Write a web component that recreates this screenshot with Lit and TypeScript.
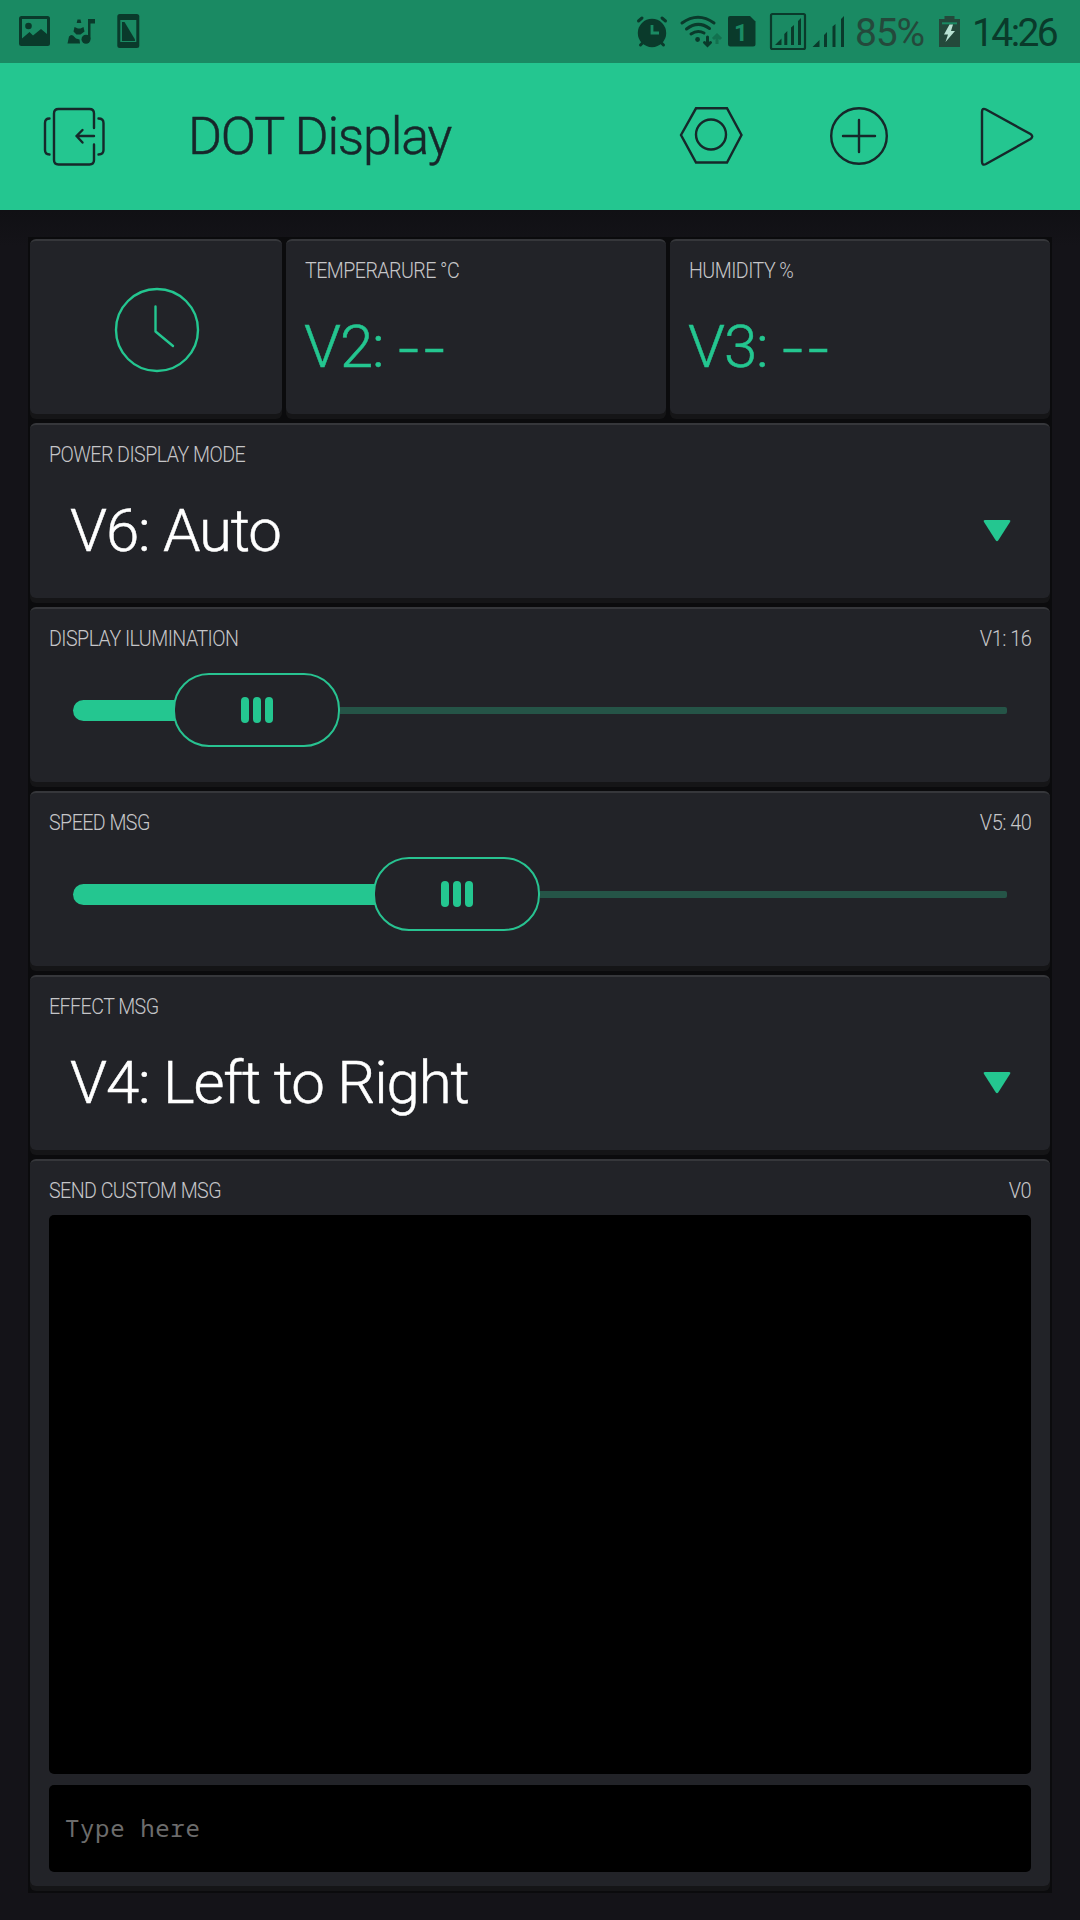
import { LitElement, html, svg, css, nothing } from "lit";
import type { SVGTemplateResult, TemplateResult } from "lit";
import { customElement, property } from "lit/decorators.js";
import { styleMap } from "lit/directives/style-map.js";

/** Status bar glyph: a full-height slice of the bar starting at `x`. */
const glyph = (x: number, w: number, body: SVGTemplateResult) =>
  html`<svg width=${w} height="63" viewBox="${x} 0 ${w} 63">${body}</svg>`;

/** App bar glyph: a full-height slice of the bar starting at `x`. */
const tool = (x: number, w: number, body: SVGTemplateResult) =>
  html`<svg class="tool" width=${w} height="147" viewBox="${x} 63 ${w} 147">${body}</svg>`;

@customElement("status-bar")
class StatusBar extends LitElement {
  static styles = css`
    :host {
      display: flex;
      height: 63px;
      padding-left: 15px;
      box-sizing: border-box;
      background: #1a8a63;
      color: #0a3a2b;
      font-family: Roboto, "Liberation Sans", sans-serif;
      font-size: 39px;
      line-height: 67px;
    }
    svg { display: block; flex: none; fill: #0a3a2b; }
    .spacer { flex: 1; }
    .line { fill: none; stroke: #0a3a2b; stroke-width: 3; stroke-linecap: round; }
    .frame { fill: none; stroke: #0a3a2b; stroke-width: 2.2; }
    .up { fill: none; stroke: #12714f; stroke-width: 3; }
    .cut { fill: #1a8a63; }
    .cut-line { fill: none; stroke: #1a8a63; stroke-width: 2.8; }
    .sim { font: 700 24px Roboto, sans-serif; fill: #1a8a63; }
    .cell { fill: #24493b; }
    .bolt { fill: #b9e2d3; }
    .percent { width: 80px; padding-left: 5px; letter-spacing: -1.2px; color: #24493b; white-space: nowrap; }
    .clock { width: 108px; padding-left: 7px; letter-spacing: -2.6px; white-space: nowrap; }
  `;
  render() {
    return html`
      ${glyph(15, 45, svg`
        <rect x="19" y="16" width="31" height="30" rx="2.5"/>
        <path class="cut" d="M22 19H47V34L41 29L33 35.5L29.5 32L22 38.5Z"/>
        <circle cx="28.5" cy="26" r="3.3"/>`)}
      ${glyph(60, 50, svg`
        <path d="M88 19H95V23.5H90.5V39H88Z"/>
        <circle cx="86" cy="39.3" r="4.5"/>
        <path d="M77.5 19.5h3l.8 3.5h-4.6zM74.5 27l3.500 1.500h2.500l3-1.500 1 4.500-4 3h-4l-3-3zM71 35l2 .5 3 3 3.500 1 .5 4H67.500L69 36.500z"/>`)}
      ${glyph(110, 40, svg`
        <rect x="117.300" y="14" width="22" height="34" rx="2.5"/>
        <rect class="cut" x="120.300" y="20" width="16" height="22"/>
        <path d="M122 22h2.500L135 39.500V41H122z"/>`)}
      <span class="spacer"></span>
      ${glyph(630, 45, svg`
        <circle cx="652" cy="33" r="14.2"/>
        <path class="line" d="M638.500 21l3.500-3M662 18l3.500 3M640.500 45l2.500-2.500M663.500 45l-2.500-2.500"/>
        <path class="cut-line" d="M652 25V33H659"/>`)}
      ${glyph(675, 50, svg`
        <path class="line" d="M682 23Q698 11.500 714 23M686.500 29Q698 20 709.500 28.500M691 34Q697.500 29.500 704 33"/>
        <circle cx="697.600" cy="39.500" r="2.400"/>
        <path class="line" d="M707.500 37V45M704.500 42.500L707.500 45.500L710.500 42.500"/>
        <path class="up" d="M717 44V35M713 39L717 35L721 39"/>`)}
      ${glyph(725, 40, svg`
        <path d="M730 16H750L755.500 21.500V44Q755.500 46.500 753 46.500H730.500Q728 46.500 728 44V18Q728 16 730 16Z"/>
        <text class="sim" x="734" y="41">1</text>`)}
      ${glyph(765, 45, svg`
        <rect class="frame" x="771" y="14" width="34" height="35" rx="1.5"/>
        <path d="M775 45L781.500 38.500V45ZM784.300 45V34L787.300 31V45ZM791 45V27.500L794 25V45ZM798 45V21L801 18V45Z"/>`)}
      ${glyph(810, 40, svg`
        <path d="M812.500 47L819.500 40V47ZM824 47V35L827 32V47ZM832.500 47V26.500L835.500 24V47ZM841 47V19L844 16V47Z"/>`)}
      <span class="percent">85%</span>
      ${glyph(935, 30, svg`
        <path class="cell" d="M944.500 16H954.500V19H960V47H939V19H944.500Z"/>
        <rect class="cut" x="942" y="22.300" width="15" height="2"/>
        <path class="bolt" d="M949.500 24.500H953L951 31H955L945.500 42L948 34.500H944Z"/>`)}
      <span class="clock">14:26</span>
    `;
  }
}

@customElement("app-bar")
class AppBar extends LitElement {
  static styles = css`
    :host {
      display: flex;
      height: 147px;
      background: #24c690;
      color: #17262a;
      font-family: Roboto, "Liberation Sans", sans-serif;
    }
    .tool {
      display: block;
      flex: none;
      fill: none;
      stroke: #16282a;
      stroke-width: 2.4;
      stroke-linecap: round;
      stroke-linejoin: round;
    }
    .title {
      flex: 1;
      padding-left: 30px;
      font-size: 52px;
      font-weight: 300;
      line-height: 147px;
      letter-spacing: -1.2px;
      -webkit-text-stroke: 0.5px #17262a;
    }
  `;
  render() {
    return html`
      ${tool(0, 158, svg`
        <path d="M94 128V113.500Q94 109 89.500 109H58.500Q54 109 54 113.500V160Q54 164.500 58.500 164.500H89.500Q94 164.500 94 160V144.500"/>
        <path d="M94 136H76.500M82.500 130L76.500 136L82.500 142.500"/>
        <path d="M49.500 118.500Q45 118.500 45 123V150Q45 154.500 49.500 154.500M98.500 118.500Q103.500 118.500 103.500 123V150Q103.500 154.500 98.500 154.500"/>`)}
      <span class="title">DOT Display</span>
      ${tool(660, 110, svg`
        <path d="M681 135L696 108.300H727L741.500 135L727 162.500H696Z" stroke-linejoin="miter"/>
        <circle cx="711" cy="134.500" r="15"/>`)}
      ${tool(770, 180, svg`
        <circle cx="859" cy="136" r="27.800"/>
        <path d="M859 120V152M843 136H875"/>`)}
      ${tool(950, 130, svg`
        <path d="M982 112Q982 107.500 986 109.500L1030.500 134Q1034 136.500 1030.500 139L986 164Q982 166 982 161.500Z"/>`)}
    `;
  }
}

@customElement("widget-card")
class WidgetCard extends LitElement {
  @property() label = "";
  @property() pin = "";
  static styles = css`
    :host {
      display: flex;
      flex-direction: column;
      box-sizing: border-box;
      min-width: 0;
      padding: 0 19px;
      border-radius: 6px;
      background: #222328;
      border-top: 2px solid #36373b;
      box-shadow: 0 5px 0 #151517;
      margin-bottom: 5px;
      font-family: Roboto, "Liberation Sans", sans-serif;
    }
    .head {
      display: flex;
      flex: none;
      justify-content: space-between;
      height: 54px;
      line-height: 60px;
      font-size: 21.5px;
      font-weight: 300;
      color: #c6c6c8;
      letter-spacing: -0.6px;
      white-space: nowrap;
    }
    .label { transform: scaleX(0.913); transform-origin: 0 0; }
    .pin { transform: scaleX(0.93); transform-origin: 100% 0; }
  `;
  render() {
    return html`
      ${this.label
        ? html`<div class="head"><span class="label">${this.label}</span><span class="pin">${this.pin || nothing}</span></div>`
        : nothing}
      <slot></slot>
    `;
  }
}

@customElement("pin-slider")
class PinSlider extends LitElement {
  /** Width in pixels of the filled part left of the thumb. */
  @property({ type: Number }) filled = 0;
  static styles = css`
    :host {
      display: flex;
      align-items: center;
      height: 74px;
      margin: 10px 24px 0;
    }
    .fill {
      flex: none;
      height: 21px;
      margin-right: -6px;
      padding-right: 6px;
      border-radius: 10.5px 0 0 10.5px;
      background: #24c690;
    }
    .thumb {
      flex: none;
      display: flex;
      align-items: center;
      justify-content: center;
      gap: 4px;
      box-sizing: border-box;
      width: 167px;
      height: 74px;
      border: 2px solid #28c391;
      border-radius: 36px;
      background: #222328;
      z-index: 1;
    }
    .grip { width: 8px; height: 26px; border-radius: 4px; background: #24c690; }
    .rest { flex: 1; height: 7px; border-radius: 0 2px 2px 0; background: #255447; }
  `;
  render() {
    return html`
      <div class="fill" style=${styleMap({ width: `${this.filled}px` })}></div>
      <div class="thumb"><i class="grip"></i><i class="grip"></i><i class="grip"></i></div>
      <div class="rest"></div>
    `;
  }
}

@customElement("app-root")
class AppRoot extends LitElement {
  static styles = css`
    :host {
      display: flex;
      flex-direction: column;
      box-sizing: border-box;
      height: 1920px;
      background: #141318;
      font-family: Roboto, "Liberation Sans", sans-serif;
    }
    .board {
      flex: 1;
      padding: 27px 28px;
      background: linear-gradient(#101014, #141318 36px);
    }
    .grid {
      display: grid;
      grid-template-columns: 252px 380px 380px;
      grid-template-rows: repeat(5, 180px) 732px;
      gap: 4px;
      padding: 2px;
      background: #0b0b0d;
    }
    .wide { grid-column: 1 / -1; }
    .dial {
      display: block;
      width: 88px;
      height: 88px;
      margin: 45px 0 0 64px;
      fill: none;
      stroke: #24c690;
      stroke-width: 2.4;
      stroke-linecap: round;
      stroke-linejoin: round;
    }
    .value {
      margin-left: -1px;
      font-size: 60px;
      font-weight: 300;
      line-height: 104px;
      color: #24c690;
      white-space: pre;
      letter-spacing: -1.15px;
      -webkit-text-stroke: 0.5px currentColor;
    }
    .dashes {
      display: inline-block;
      letter-spacing: 3.6px;
      transform: translate(1px, 2px) scaleX(1.24);
      transform-origin: 0 0;
    }
    .choice {
      display: flex;
      align-items: center;
      justify-content: space-between;
      padding: 0 20px 0 22px;
      color: #fff;
    }
    .arrow { flex: none; fill: #24c690; }
    .screen { height: 559px; border-radius: 5px; background: #000; }
    .input {
      height: 87px;
      margin-top: 11px;
      padding-left: 16px;
      border-radius: 5px;
      background: #000;
      color: #6c6c6c;
      font-family: "Noto Sans Mono", "DejaVu Sans Mono", monospace;
      font-size: 24px;
      letter-spacing: 0.65px;
      line-height: 86px;
    }
  `;
  private choice(label: string, value: string): TemplateResult {
    return html`
      <widget-card class="wide" label=${label}>
        <div class="value choice">
          <span>${value}</span>
          <svg class="arrow" width="28" height="22" viewBox="0 0 28 22">
            <path d="M2 0H26Q28 0 27 2L15.200 20.500Q14 22 12.800 20.500L1 2Q0 0 2 0Z"/>
          </svg>
        </div>
      </widget-card>`;
  }
  private reading(label: string, pin: string): TemplateResult {
    return html`
      <widget-card label=${label}>
        <div class="value">${pin}: <span class="dashes">--</span></div>
      </widget-card>`;
  }
  render() {
    return html`
      <status-bar></status-bar>
      <app-bar></app-bar>
      <main class="board">
        <div class="grid">
          <widget-card>
            <svg class="dial" viewBox="0 0 88 88">
              <circle cx="44" cy="44" r="41"/>
              <path d="M42.500 20.500V45.500L60 60"/>
            </svg>
          </widget-card>
          ${this.reading("TEMPERARURE °C", "V2")}
          ${this.reading("HUMIDITY %", "V3")}
          ${this.choice("POWER DISPLAY MODE", "V6: Auto")}
          <widget-card class="wide" label="DISPLAY ILUMINATION" pin="V1: 16">
            <pin-slider filled="100"></pin-slider>
          </widget-card>
          <widget-card class="wide" label="SPEED MSG" pin="V5: 40">
            <pin-slider filled="300"></pin-slider>
          </widget-card>
          ${this.choice("EFFECT MSG", "V4: Left to Right")}
          <widget-card class="wide" label="SEND CUSTOM MSG" pin="V0">
            <div class="screen"></div>
            <div class="input">Type here</div>
          </widget-card>
        </div>
      </main>
    `;
  }
}
